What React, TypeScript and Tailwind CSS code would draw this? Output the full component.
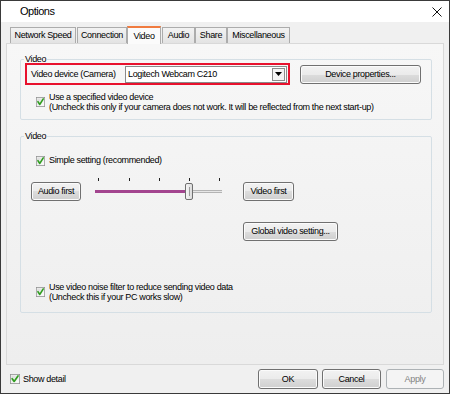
import React from "react";

const CheckBox = ({ w = 9 }: { w?: number }) => (
  <svg width={w} height={10} viewBox="0 0 13 13" preserveAspectRatio="none" className="shrink-0">
    <defs>
      <linearGradient id="cbg" x1="0" y1="0" x2="1" y2="1">
        <stop offset="0" stopColor="#d8d8d8" />
        <stop offset="1" stopColor="#ffffff" />
      </linearGradient>
    </defs>
    <rect x="0.5" y="0.5" width="12" height="12" fill="#f4f4f4" stroke="#8e8f8f" />
    <rect x="2" y="2" width="9" height="9" fill="url(#cbg)" />
    <path d="M2.8 6.2 L5.4 9.6 L10.4 2.6" fill="none" stroke="#2f9e1f" strokeWidth="2.2" strokeLinecap="round" strokeLinejoin="round" />
  </svg>
);

const Btn = ({ label, className = "", disabled = false }: { label: string; className?: string; disabled?: boolean }) => (
  <div
    className={`flex items-center justify-center whitespace-nowrap rounded-[3px] border ${
      disabled
        ? "border-[#adb2b5] bg-[#f4f4f4] text-[#838383]"
        : "border-[#707070] bg-[linear-gradient(#f2f2f2,#ebebeb_50%,#dddddd_50%,#cfcfcf)] text-black shadow-[inset_0_0_0_1px_#fbfbfb]"
    } ${className}`}
  >
    {label}
  </div>
);

const tabs = [
  { name: "Network Speed", w: "w-[66px] ml-[9px]" },
  { name: "Connection", w: "w-[50px] ml-[1px]" },
  { name: "Video", w: "w-[34px]", active: true },
  { name: "Audio", w: "w-[33px] ml-[1px]" },
  { name: "Share", w: "w-[32px]" },
  { name: "Miscellaneous", w: "w-[63px]" },
];

const Slider = () => {
  const ticks = [5, 36, 66, 96, 126];
  return (
    <div className="relative ml-[12px] h-[28px] w-[130px]">
      {ticks.map((t) => (
        <div key={t} className="absolute top-[1px] h-[3px] w-px bg-[#222]" style={{ left: t }} />
      ))}
      <div className="absolute left-[2px] top-[13px] h-[3px] w-[127px] border-y border-[#b4b4b4] bg-[#e7e7e7]" />
      <div className="absolute left-[2px] top-[13px] h-[3px] w-[91px] bg-[#a3458f]" />
      <div className="absolute left-[92px] top-[6px] h-[17px] w-[8px] rounded-[2px] border border-[#707070] bg-[linear-gradient(90deg,#f6f6f6,#dcdcdc)]">
        <div className="mx-auto mt-[3px] h-[9px] w-px bg-[#9a9a9a]" />
      </div>
    </div>
  );
};

export default function App() {
  return (
    <div className="h-[394px] w-[450px] whitespace-nowrap border border-[#3a3a3a] bg-[#f0f0f0] font-['Liberation_Sans',Arial,sans-serif] text-[9px] leading-[11px] tracking-[-0.35px] text-black">
      {/* title bar */}
      <div className="flex h-[21px] items-center bg-white">
        <span className="ml-[19px] text-[11px] tracking-[-0.5px]">Options</span>
        <svg className="ml-auto mr-[7px]" width="10" height="10" viewBox="0 0 10 10">
          <path d="M0.5 0.5 L9.5 9.5 M9.5 0.5 L0.5 9.5" stroke="#111" strokeWidth="1" />
        </svg>
      </div>

      {/* tabs */}
      <div className="mt-[4px] flex h-[17px] items-end">
        {tabs.map((t) =>
          t.active ? (
            <div
              key={t.name}
              className={`relative z-10 -mb-px flex h-[18px] items-center justify-center border border-b-0 border-[#acacac] border-t-2 border-t-[#f07b3f] bg-[#fbfbfb] ${t.w}`}
            >
              {t.name}
            </div>
          ) : (
            <div
              key={t.name}
              className={`flex h-[16px] items-center justify-center border border-b-0 border-[#acacac] bg-[linear-gradient(#f2f2f2,#e3e3e3)] ${t.w}`}
            >
              {t.name}
            </div>
          )
        )}
      </div>

      {/* panel */}
      <div className="mx-[5px] h-[322px] border border-[#d9d9d9] bg-[linear-gradient(#f7f7f7,#eeeeee)] pl-[13px] pt-[10px]">
        <fieldset className="w-[412px] rounded-[2px] border border-[#d5dfe5] pb-[7px]">
          <legend className="ml-[3px] px-[1px] leading-[10px]">Video</legend>
          <div className="-mt-px ml-[4px] flex items-center">
            <div className="flex h-[22px] w-[265px] items-center border-2 border-[#e8112d] pl-[4px] pr-[1px]">
              <span>Video device (Camera)</span>
              <div className="ml-auto flex h-[17px] w-[162px] items-center border border-[#8a8a8a] bg-white pl-[2px] pr-[1px]">
                <span>Logitech Webcam C210</span>
                <div className="ml-auto flex h-[13px] w-[13px] items-center justify-center border border-[#8c8c8c] bg-[#f4f4f4]">
                  <svg width="7" height="4" viewBox="0 0 7 4">
                    <path d="M0 0 L7 0 L3.5 4 Z" fill="#000" />
                  </svg>
                </div>
              </div>
            </div>
            <Btn label="Device properties..." className="ml-[10px] h-[19px] w-[121px]" />
          </div>
          <div className="ml-[15px] mt-[7px] flex items-center">
            <CheckBox />
            <div className="ml-[4px] leading-[10px]">
              <div>Use a specified video device</div>
              <div>(Uncheck this only if your camera does not work. It will be reflected from the next start-up)</div>
            </div>
          </div>
        </fieldset>

        <fieldset className="mt-[11px] w-[412px] rounded-[2px] border border-[#d5dfe5] pb-[10px]">
          <legend className="ml-[3px] px-[1px] leading-[10px]">Video</legend>
          <div className="ml-[15px] mt-[14px] flex items-center">
            <CheckBox />
            <span className="ml-[4px]">Simple setting (recommended)</span>
          </div>
          <div className="ml-[10px] mt-[11px] flex items-center">
            <Btn label="Audio first" className="h-[19px] w-[50px]" />
            <Slider />
            <Btn label="Video first" className="ml-[20px] h-[19px] w-[51px]" />
          </div>
          <Btn label="Global video setting..." className="ml-[222px] mt-[17px] h-[19px] w-[95px]" />
          <div className="ml-[15px] mt-[41px] flex items-center">
            <CheckBox />
            <div className="ml-[4px] leading-[10px]">
              <div>Use video noise filter to reduce sending video data</div>
              <div>(Uncheck this if your PC works slow)</div>
            </div>
          </div>
        </fieldset>
      </div>

      {/* bottom */}
      <div className="flex h-[28px] items-center pl-[9px] pr-[5px]">
        <CheckBox w={10} />
        <span className="ml-[3px]">Show detail</span>
        <div className="ml-auto flex items-center">
          <Btn label="OK" className="h-[20px] w-[60px]" />
          <Btn label="Cancel" className="ml-[4px] h-[20px] w-[59px]" />
          <Btn label="Apply" disabled className="ml-[5px] h-[20px] w-[58px]" />
        </div>
      </div>
    </div>
  );
}
